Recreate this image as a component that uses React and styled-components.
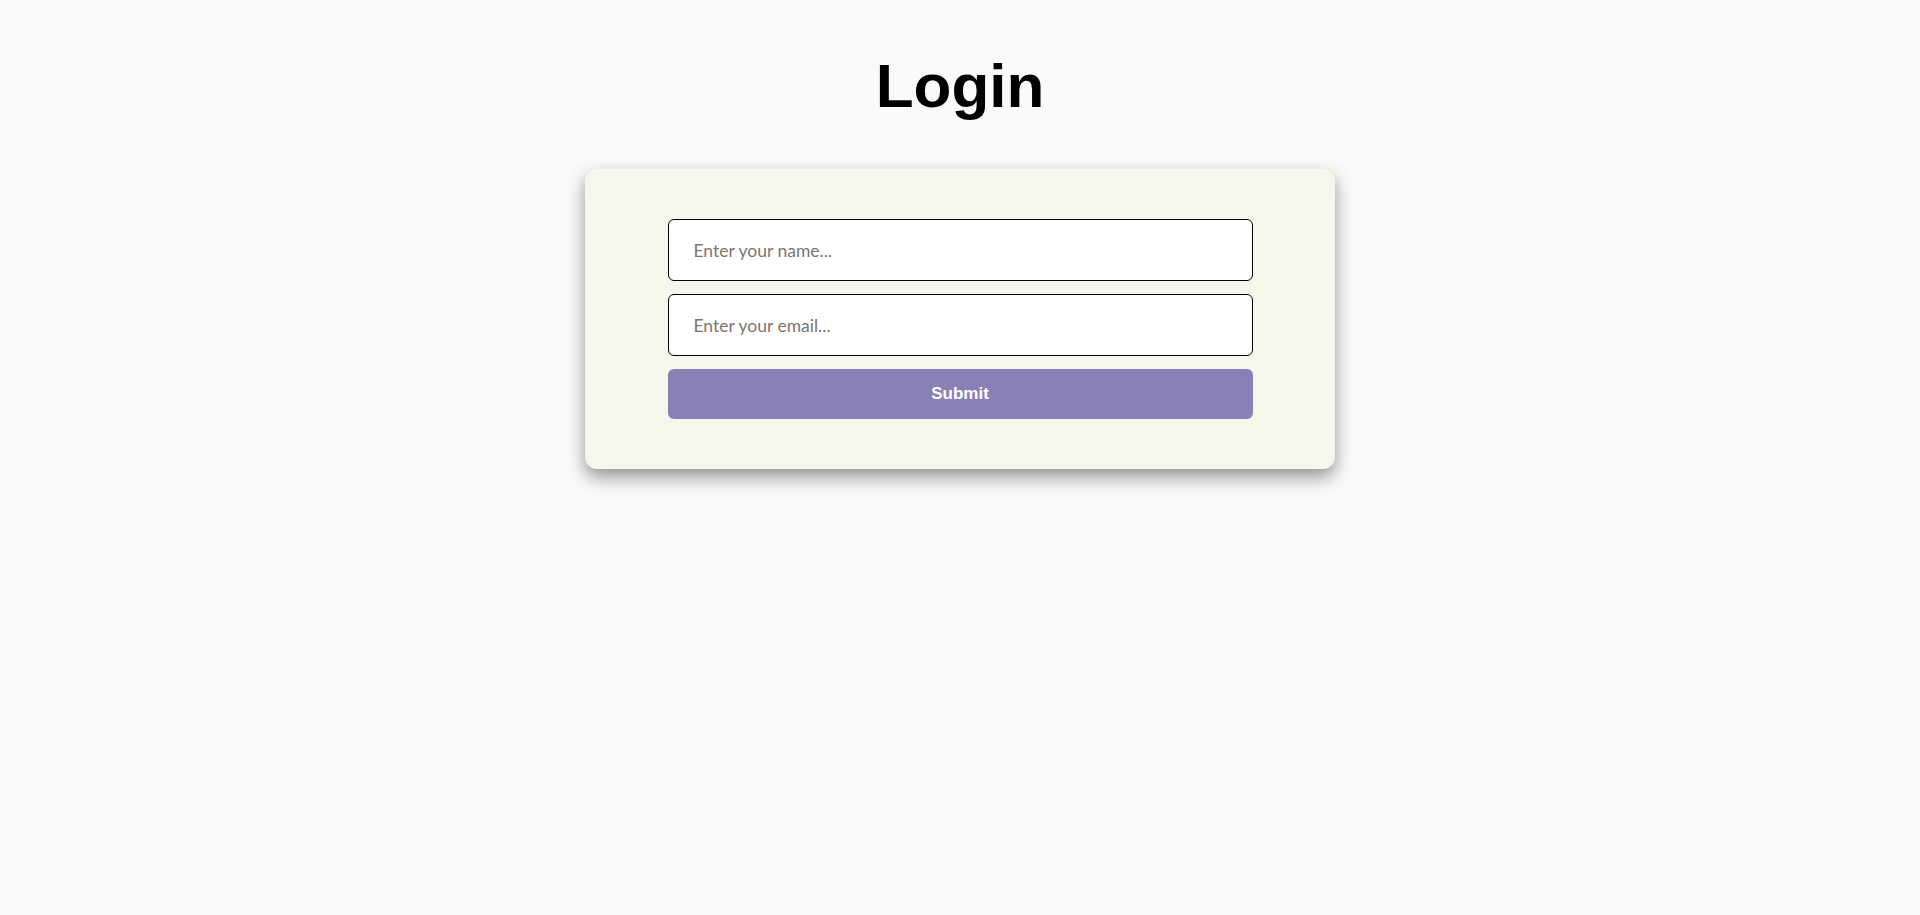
import React, { useState } from "react";
import styled, { createGlobalStyle } from "styled-components";

const GlobalStyle = createGlobalStyle`
    html, body {
        margin: 0;
        padding: 0;
        background-color: #fafafa;
    }
    * {
        box-sizing: border-box;
    }
`;

export default function App() {
    const [data, setData] = useState({ name: "", email: "" });
    const changing = (e) => {
        setData({
            ...data,
            [e.target.name]: e.target.value,
        });
    };
    const sending = (e) => {
        e.preventDefault();
    };
    return (
        <Page>
            <GlobalStyle />
            <Title>Login</Title>
            <Card onSubmit={sending}>
                <Input
                    type="text"
                    name="name"
                    value={data.name}
                    placeholder="Enter your name..."
                    onChange={changing}
                />
                <Input
                    type="email"
                    name="email"
                    value={data.email}
                    placeholder="Enter your email..."
                    onChange={changing}
                />
                <SubmitButton type="submit">Submit</SubmitButton>
            </Card>
        </Page>
    );
}

const Page = styled.div`
    min-height: 100vh;
    display: flex;
    flex-direction: column;
    align-items: center;
    padding-top: 51px;
`;

const Title = styled.h1`
    margin: 0 0 49px 0;
    font-family: "Liberation Sans", Arial, sans-serif;
    font-weight: 700;
    font-size: 62px;
    line-height: 69px;
    color: #000;
`;

const Card = styled.form`
    width: 750px;
    display: flex;
    flex-direction: column;
    align-items: center;
    gap: 13px;
    padding: 50px 0 50px 0;
    background-color: #f6f6eb;
    border-radius: 12px;
    box-shadow: 0 8px 18px rgba(0, 0, 0, 0.42);
`;

const Input = styled.input`
    width: 585px;
    height: 62px;
    padding: 0 25px;
    border: 1px solid #000;
    border-radius: 6px;
    background-color: #fff;
    font-family: Lato, "Open Sans", sans-serif;
    font-size: 17.5px;
    color: #222;
    outline: none;
    &::placeholder {
        color: #7a7672;
    }
`;

const SubmitButton = styled.button`
    width: 585px;
    height: 50px;
    border: none;
    border-radius: 6px;
    background-color: #8b80b5;
    color: #fff;
    font-family: "Liberation Sans", Arial, sans-serif;
    font-weight: 700;
    font-size: 17px;
    cursor: pointer;
    &:hover {
        background-color: #7d71aa;
    }
`;
